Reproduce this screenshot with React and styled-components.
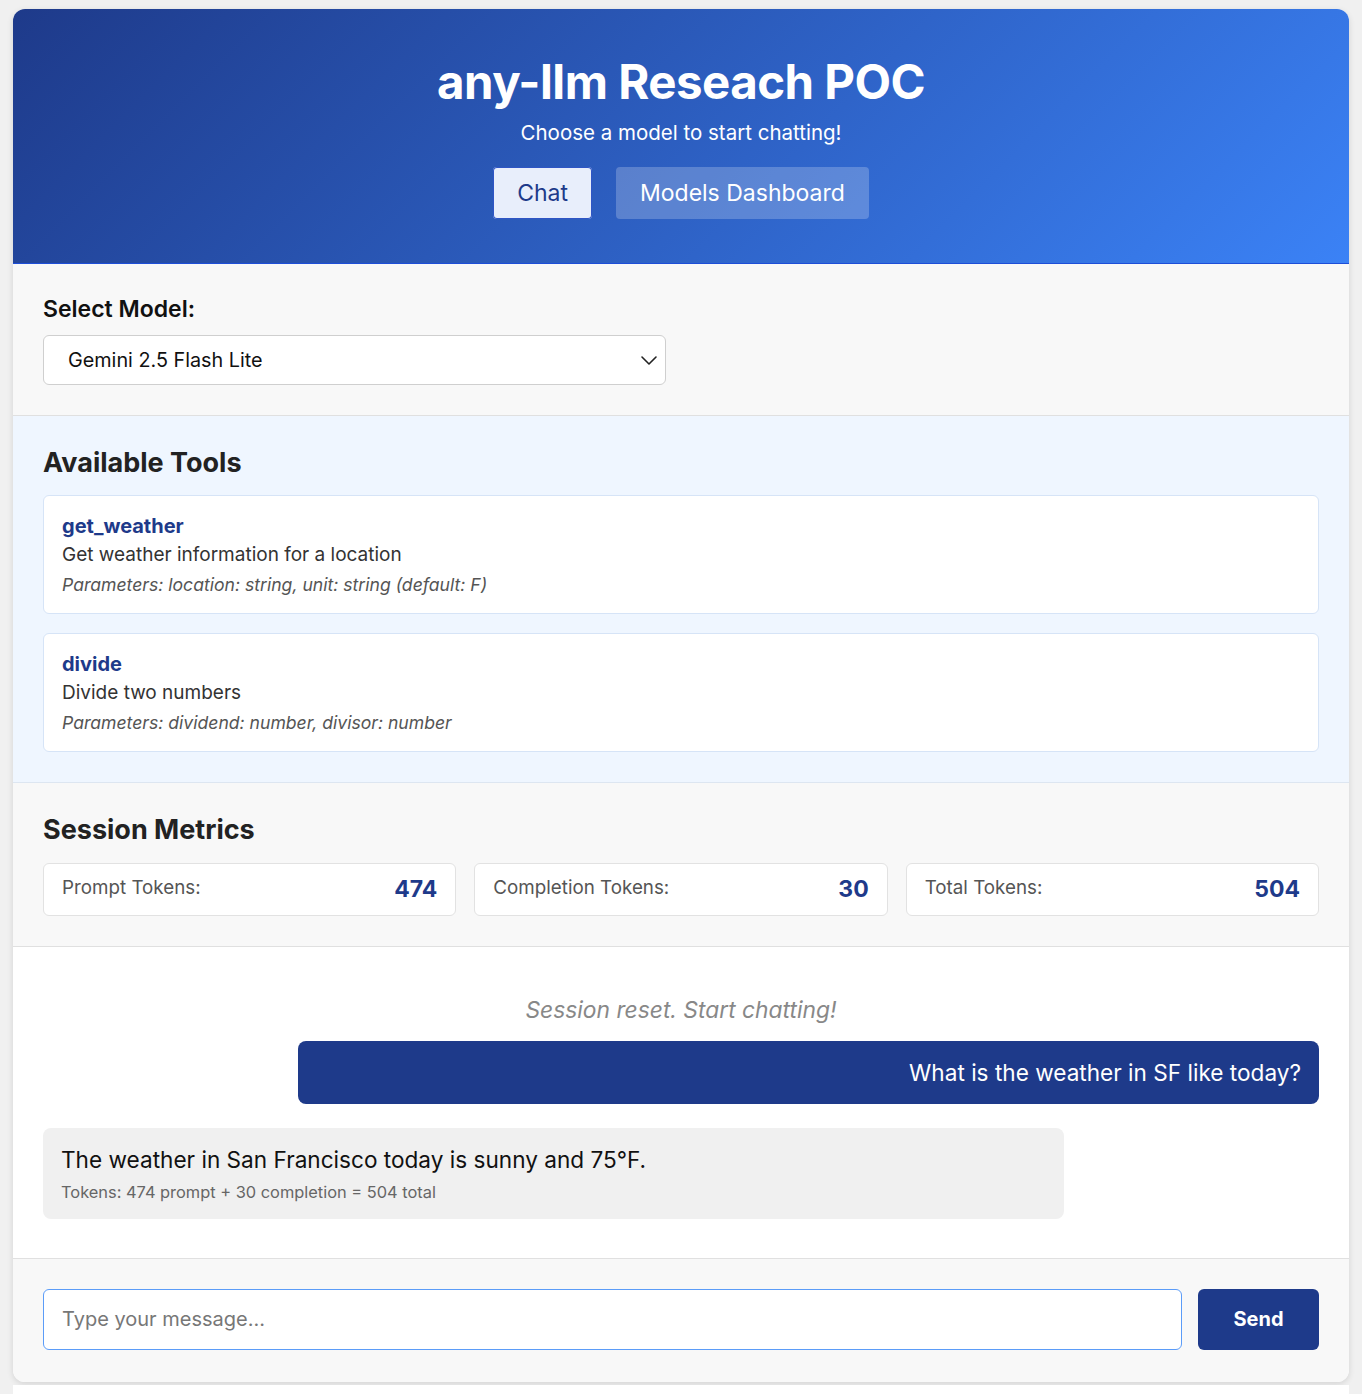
import React, { useState } from 'react';
import styled, { createGlobalStyle } from 'styled-components';

const colors = {
  navy: '#1e3a8a',
  blue: '#3b82f6',
  page: '#f0f0f0',
  panel: '#f8f8f8',
  toolsBg: '#eff6ff',
  line: '#e0e0e0',
  text: '#333333',
  muted: '#555555',
};

const GlobalStyle = createGlobalStyle`
  * { box-sizing: border-box; }
  body {
    margin: 0;
    padding: 9px 13px 0 13px;
    background: ${colors.page};
    font-family: Inter, 'Noto Sans', 'Liberation Sans', sans-serif;
    color: ${colors.text};
  }
`;

const Shell = styled.div`
  background: #ffffff;
  border-radius: 12px;
  overflow: hidden;
  box-shadow: 0 2px 6px rgba(0, 0, 0, 0.12);
`;

const Header = styled.header`
  background: linear-gradient(135deg, ${colors.navy} 0%, ${colors.blue} 100%);
  height: 255px;
  display: flex;
  flex-direction: column;
  align-items: center;
  padding-top: 49px;
  color: #fff;
  border-bottom: 1px solid #1d4ed8;
`;

const Title = styled.h1`
  margin: 0;
  font-size: 47.4px;
  font-weight: 700;
  line-height: 1;
  letter-spacing: -0.5px;
`;

const Subtitle = styled.p`
  margin: 18px 0 0;
  font-size: 20.5px;
  line-height: 1;
`;

const Tabs = styled.nav`
  display: flex;
  gap: 24px;
  margin-top: 23px;
`;

const Tab = styled.button`
  height: 52px;
  padding: 0 24px;
  border: none;
  border-radius: 4px;
  font-family: inherit;
  font-size: 23px;
  cursor: pointer;
  background: ${(p) => (p.$active ? '#e8eefb' : 'rgba(255, 255, 255, 0.22)')};
  color: ${(p) => (p.$active ? colors.navy : '#ffffff')};
  box-shadow: ${(p) => (p.$active ? 'inset 0 0 0 1px #2f55c5' : 'none')};
`;

const Section = styled.section`
  background: ${(p) => p.$bg || colors.panel};
  padding: ${(p) => p.$pad || '30px'};
  border-bottom: 1px solid ${(p) => p.$line || colors.line};
`;

const Label = styled.label`
  display: block;
  font-size: 23px;
  font-weight: 600;
  color: #111;
  margin: 1px 0 12px;
`;

const SelectBox = styled.div`
  position: relative;
  width: 623px;
  height: 50px;
  background: #fff;
  border: 1px solid #cfcfcf;
  border-radius: 6px;
  display: flex;
  align-items: center;
  padding: 0 24px;
  font-size: 19.8px;
  color: #111;
`;

const Chevron = styled.svg`
  position: absolute;
  right: 6px;
  top: 14px;
`;

const SectionTitle = styled.h3`
  margin: 0 0 16px;
  font-size: 27px;
  font-weight: 700;
  color: #222;
  line-height: 1.2;
  padding-top: 1px;
`;

const ToolList = styled.div`
  display: flex;
  flex-direction: column;
  gap: 19px;
`;

const ToolCard = styled.div`
  background: #fff;
  border: 1px solid #d6e4f7;
  border-radius: 6px;
  padding: 17px 18px 17px;
`;

const ToolName = styled.div`
  font-size: 20px;
  font-weight: 700;
  color: ${colors.navy};
  line-height: 26px;
`;

const ToolDesc = styled.div`
  font-size: 19px;
  color: #333;
  line-height: 24px;
  margin-top: 4px;
`;

const ToolParams = styled.div`
  font-size: 17.6px;
  font-style: italic;
  color: #555;
  line-height: 22px;
  margin-top: 7px;
`;

const MetricsGrid = styled.div`
  display: grid;
  grid-template-columns: repeat(3, 1fr);
  gap: 18px;
`;

const MetricCard = styled.div`
  background: #fff;
  border: 1px solid #e2e2e2;
  border-radius: 6px;
  height: 53px;
  display: flex;
  justify-content: space-between;
  align-items: center;
  padding: 0 18px;
`;

const MetricLabel = styled.span`
  font-size: 18.8px;
  color: #555;
  margin-top: -3px;
`;

const MetricValue = styled.span`
  font-size: 23px;
  font-weight: 700;
  color: ${colors.navy};
`;

const ChatArea = styled.div`
  background: #fff;
  padding: 49px 30px 39px;
  display: flex;
  flex-direction: column;
  border-bottom: 1px solid ${colors.line};
`;

const SystemNote = styled.div`
  text-align: center;
  font-style: italic;
  color: #888;
  font-size: 22.8px;
  line-height: 28px;
  margin-bottom: 17px;
`;

const Bubble = styled.div`
  max-width: 80%;
  width: 80%;
  align-self: ${(p) => (p.$user ? 'flex-end' : 'flex-start')};
  background: ${(p) => (p.$user ? colors.navy : '#f0f0f0')};
  color: ${(p) => (p.$user ? '#fff' : '#111')};
  text-align: ${(p) => (p.$user ? 'right' : 'left')};
  border-radius: 8px;
  padding: ${(p) => (p.$user ? '17px 18px' : '17px 18px 17px')};
  font-size: 22.6px;
  line-height: 29px;
  margin-bottom: 24px;
  &:last-child { margin-bottom: 0; }
`;

const TokenNote = styled.div`
  font-size: 16.4px;
  color: #666;
  line-height: 20px;
  margin-top: 8px;
`;

const InputBar = styled.form`
  background: ${colors.panel};
  padding: 30px 30px 32px;
  display: flex;
  gap: 16px;
`;

const MessageInput = styled.input`
  flex: 1;
  height: 61px;
  border: 1px solid #5b9cf8;
  border-radius: 6px;
  padding: 0 18px;
  font-family: inherit;
  font-size: 20px;
  color: #111;
  outline: none;
  &::placeholder { color: #777; }
`;

const SendButton = styled.button`
  width: 121px;
  height: 61px;
  border: none;
  border-radius: 6px;
  background: ${colors.navy};
  color: #fff;
  font-family: inherit;
  font-size: 20px;
  font-weight: 700;
  cursor: pointer;
`;

const Below = styled.div`
  height: 40px;
  background: #fff;
  margin-top: 3px;
`;

const tools = [
  {
    name: 'get_weather',
    desc: 'Get weather information for a location',
    params: 'Parameters: location: string, unit: string (default: F)',
  },
  {
    name: 'divide',
    desc: 'Divide two numbers',
    params: 'Parameters: dividend: number, divisor: number',
  },
];

const metrics = [
  { label: 'Prompt Tokens:', value: 474 },
  { label: 'Completion Tokens:', value: 30 },
  { label: 'Total Tokens:', value: 504 },
];

export default function App() {
  const [text, setText] = useState('');
  return (
    <>
      <GlobalStyle />
      <Shell>
        <Header>
          <Title>any-llm Reseach POC</Title>
          <Subtitle>Choose a model to start chatting!</Subtitle>
          <Tabs>
            <Tab $active>Chat</Tab>
            <Tab>Models Dashboard</Tab>
          </Tabs>
        </Header>

        <Section>
          <Label>Select Model:</Label>
          <SelectBox>
            Gemini 2.5 Flash Lite
            <Chevron width="20" height="20" viewBox="0 0 20 20" fill="none">
              <path d="M3 7l7 7 7-7" stroke="#222" strokeWidth="1.6" strokeLinecap="round" strokeLinejoin="round" />
            </Chevron>
          </SelectBox>
        </Section>

        <Section $bg={colors.toolsBg} $line="#dde6f1">
          <SectionTitle>Available Tools</SectionTitle>
          <ToolList>
            {tools.map((t) => (
              <ToolCard key={t.name}>
                <ToolName>{t.name}</ToolName>
                <ToolDesc>{t.desc}</ToolDesc>
                <ToolParams>{t.params}</ToolParams>
              </ToolCard>
            ))}
          </ToolList>
        </Section>

        <Section>
          <SectionTitle>Session Metrics</SectionTitle>
          <MetricsGrid>
            {metrics.map((m) => (
              <MetricCard key={m.label}>
                <MetricLabel>{m.label}</MetricLabel>
                <MetricValue>{m.value}</MetricValue>
              </MetricCard>
            ))}
          </MetricsGrid>
        </Section>

        <ChatArea>
          <SystemNote>Session reset. Start chatting!</SystemNote>
          <Bubble $user>What is the weather in SF like today?</Bubble>
          <Bubble>
            The weather in San Francisco today is sunny and 75°F.
            <TokenNote>Tokens: 474 prompt + 30 completion = 504 total</TokenNote>
          </Bubble>
        </ChatArea>

        <InputBar onSubmit={(e) => e.preventDefault()}>
          <MessageInput
            placeholder="Type your message..."
            value={text}
            onChange={(e) => setText(e.target.value)}
          />
          <SendButton type="submit">Send</SendButton>
        </InputBar>
      </Shell>
      <Below />
    </>
  );
}
